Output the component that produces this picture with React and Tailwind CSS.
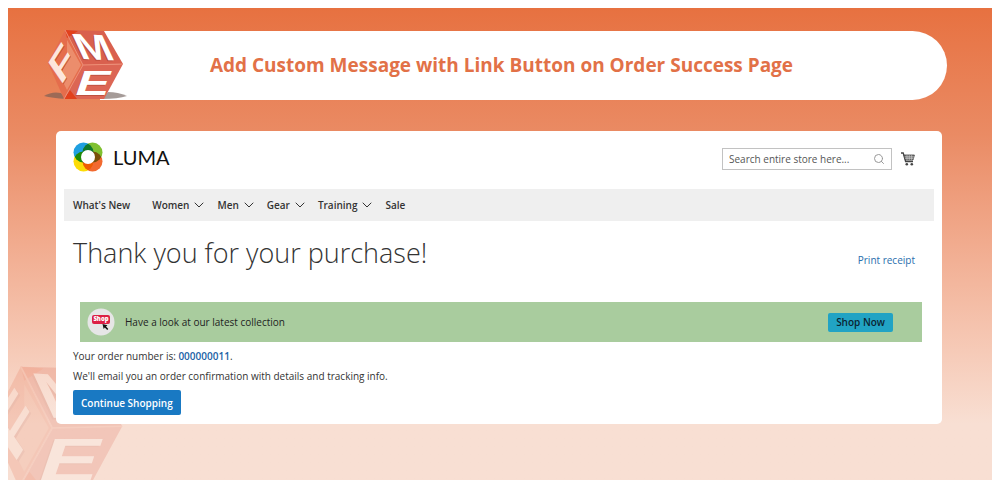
import { ChevronDown, Search } from 'lucide-react'

const navItems = [
  { label: "What's New", gap: 'mr-[22px]' },
  { label: 'Women', menu: true },
  { label: 'Men', menu: true },
  { label: 'Gear', menu: true },
  { label: 'Training', menu: true },
  { label: 'Sale' },
]

function CubeLogo({ className, shadow = true }) {
  return (
    <svg viewBox="44 28 84 74" className={className} aria-hidden="true">
      {shadow && (
        <g fill="#6b5a55" opacity="0.6">
          <path d="M44 96 Q52 91 61 93 L66 99 Q52 98 44 96Z" />
          <path d="M108 92 Q118 92 127 96 Q118 99 102 99Z" />
        </g>
      )}
      <path d="M65 30 L83 65 L64 99 L48 63Z" fill="#e56d4c" />
      <path d="M65 30 L104 31 L123 64 L83 65Z" fill="#d9604e" />
      <path d="M83 65 L123 64 L104 99 L64 99Z" fill="#dc6654" />
      <path d="M65 30 L78 31 L67 38Z M64 99 L70 90 L77 99Z" fill="#e2401c" />
      <path d="M67 40 L81 65 L67 90 L60 76 L67 61Z" fill="#f09b7a" opacity="0.7" />
      <path d="M65 30 L83 65 L64 99 M83 65 L123 64" fill="none" stroke="#ee9078" strokeWidth="1" />
      <g fontFamily="Liberation Sans, sans-serif" fontWeight="700" fontSize="36">
        <g fill="#a9402f" opacity="0.55">
          <text transform="matrix(1.19 .05 .47 1.02 80 60)">M</text>
          <text transform="matrix(1.4 0 -.33 .97 72 96)">E</text>
          <text transform="matrix(.7 -1.12 .57 .84 62 87)">F</text>
        </g>
        <g fill="#fff">
          <text transform="matrix(1.19 .05 .47 1.02 81 59)">M</text>
          <text transform="matrix(1.4 0 -.33 .97 73 95)">E</text>
          <text transform="matrix(.7 -1.12 .57 .84 61 86)" fill="#fde6dc">F</text>
        </g>
      </g>
    </svg>
  )
}

function LumaMark() {
  return (
    <svg viewBox="0 0 30 30" className="isolate h-[30px] w-[30px]" aria-hidden="true">
      <g className="[&>circle]:mix-blend-multiply">
        <circle cx="10.5" cy="10.5" r="10" fill="#1f9fe0" />
        <circle cx="19.5" cy="10.5" r="10" fill="#7fc02f" />
        <circle cx="10.5" cy="19.5" r="10" fill="#fcdc06" />
        <circle cx="19.5" cy="19.5" r="10" fill="#f26a30" />
      </g>
      <circle cx="15" cy="15" r="7" fill="#fff" />
    </svg>
  )
}

function CartIcon() {
  return (
    <svg viewBox="0 0 14 14" className="h-3.5 w-3.5" fill="none" stroke="#444" aria-hidden="true">
      <path d="M0 1 H2.2 L4.6 9.5 H12" strokeWidth="1.3" />
      <path d="M3 3 H13.4 L12 8 H4.4Z" fill="#777" strokeWidth="0.8" />
      <path d="M3.6 4.8 H13 M4 6.4 H12.6 M6 3 V8 M8.3 3 V8 M10.6 3 V8" stroke="#ddd" strokeWidth="0.5" />
      <circle cx="5.8" cy="12.3" r="1.3" fill="#444" stroke="none" />
      <circle cx="10.8" cy="12.3" r="1.3" fill="#444" stroke="none" />
    </svg>
  )
}

function ShopBadge() {
  return (
    <svg viewBox="0 0 28 28" className="h-7 w-7" aria-hidden="true">
      <circle cx="14" cy="14" r="13.5" fill="#e6e6e6" />
      <rect x="5" y="7" width="18" height="9" rx="2" fill="#dc1f45" />
      <text x="14" y="13" textAnchor="middle" fontFamily="Open Sans, sans-serif" fontWeight="800" fontSize="6" fill="#fff">
        Shop
      </text>
      <path d="M15.5 16 L20.5 17.3 L19 18.4 L21.3 20.9 L20.2 22 L17.8 19.6 L16.7 21Z" fill="#111" />
    </svg>
  )
}

export default function App() {
  return (
    <div className="flex min-h-screen bg-white p-2 font-['Open_Sans',sans-serif] text-[10px] leading-5 text-[#333]">
      <div className="relative flex-1 overflow-hidden bg-linear-to-b from-[#e77140] via-[#ea8b64] via-27% to-[#f8dfd3] to-88% pr-[50px] pl-12">
        <CubeLogo shadow={false} className="absolute -left-6 top-[355px] h-[130px] w-[147px] opacity-20" />

        <header className="relative -mr-[5px] -ml-3 flex items-center pt-5">
          <CubeLogo className="z-10 h-[74px] w-[84px] shrink-0" />
          <div className="-ml-7 flex h-[69px] flex-1 items-center justify-center rounded-r-full bg-white pr-11">
            <h1 className="text-[19px] font-bold text-[#e27147]">
              Add Custom Message with Link Button on Order Success Page
            </h1>
          </div>
        </header>

        <main className="relative mt-[29px] rounded-[5px] bg-white px-2 pb-[9px]">
          <div className="flex items-center justify-between pt-[11px] pr-[19px] pl-[9px]">
            <a href="#" className="flex items-center gap-2.5 font-['Lato',sans-serif] text-[20px] text-[#111]">
              <LumaMark />
              LUMA
            </a>
            <form className="flex items-center gap-[9px] pt-1" onSubmit={(event) => event.preventDefault()}>
              <div className="flex h-[22px] w-[170px] items-center border border-[#c2c2c2] px-1.5">
                <input
                  type="search"
                  aria-label="Search"
                  placeholder="Search entire store here..."
                  className="min-w-0 flex-1 outline-none placeholder:text-[#555]"
                />
                <button type="submit" aria-label="Submit search">
                  <Search className="h-3 w-3 text-[#999]" />
                </button>
              </div>
              <a href="#" aria-label="My cart">
                <CartIcon />
              </a>
            </form>
          </div>

          <nav className="mt-[17px] flex h-8 items-center bg-[#efefef] pl-[9px] font-semibold text-[#333]">
            {navItems.map((item) => (
              <a key={item.label} href="#" className={`flex items-center gap-0.5 ${item.gap || 'mr-2.5'}`}>
                {item.label}
                {item.menu && <ChevronDown className="h-4 w-4" strokeWidth={1.5} />}
              </a>
            ))}
          </nav>

          <div className="flex items-center justify-between pt-3 pr-[19px] pl-[9px]">
            <h2 className="text-[27px] leading-10 font-light">Thank you for your purchase!</h2>
            <a href="#" className="pt-3.5 text-[#2a6ead]">Print receipt</a>
          </div>

          <div className="mt-[29px] mr-3 ml-4 flex h-10 items-center bg-[#a9cc9e] pr-[29px] pl-[7px]">
            <ShopBadge />
            <p className="ml-2.5 flex-1 text-[#222]">Have a look at our latest collection</p>
            <button type="button" className="h-[19px] rounded-xs bg-[#21a3c4] px-2 leading-4 font-semibold text-[#0b2533]">
              Shop Now
            </button>
          </div>

          <div className="pt-1 pl-[9px]">
            <p>
              Your order number is: <a href="#" className="font-semibold text-[#1b62a5]">000000011</a>.
            </p>
            <p>We'll email you an order confirmation with details and tracking info.</p>
            <button type="button" className="mt-1 h-[25px] rounded-xs bg-[#1979c3] px-2 font-semibold text-white">
              Continue Shopping
            </button>
          </div>
        </main>
      </div>
    </div>
  )
}
